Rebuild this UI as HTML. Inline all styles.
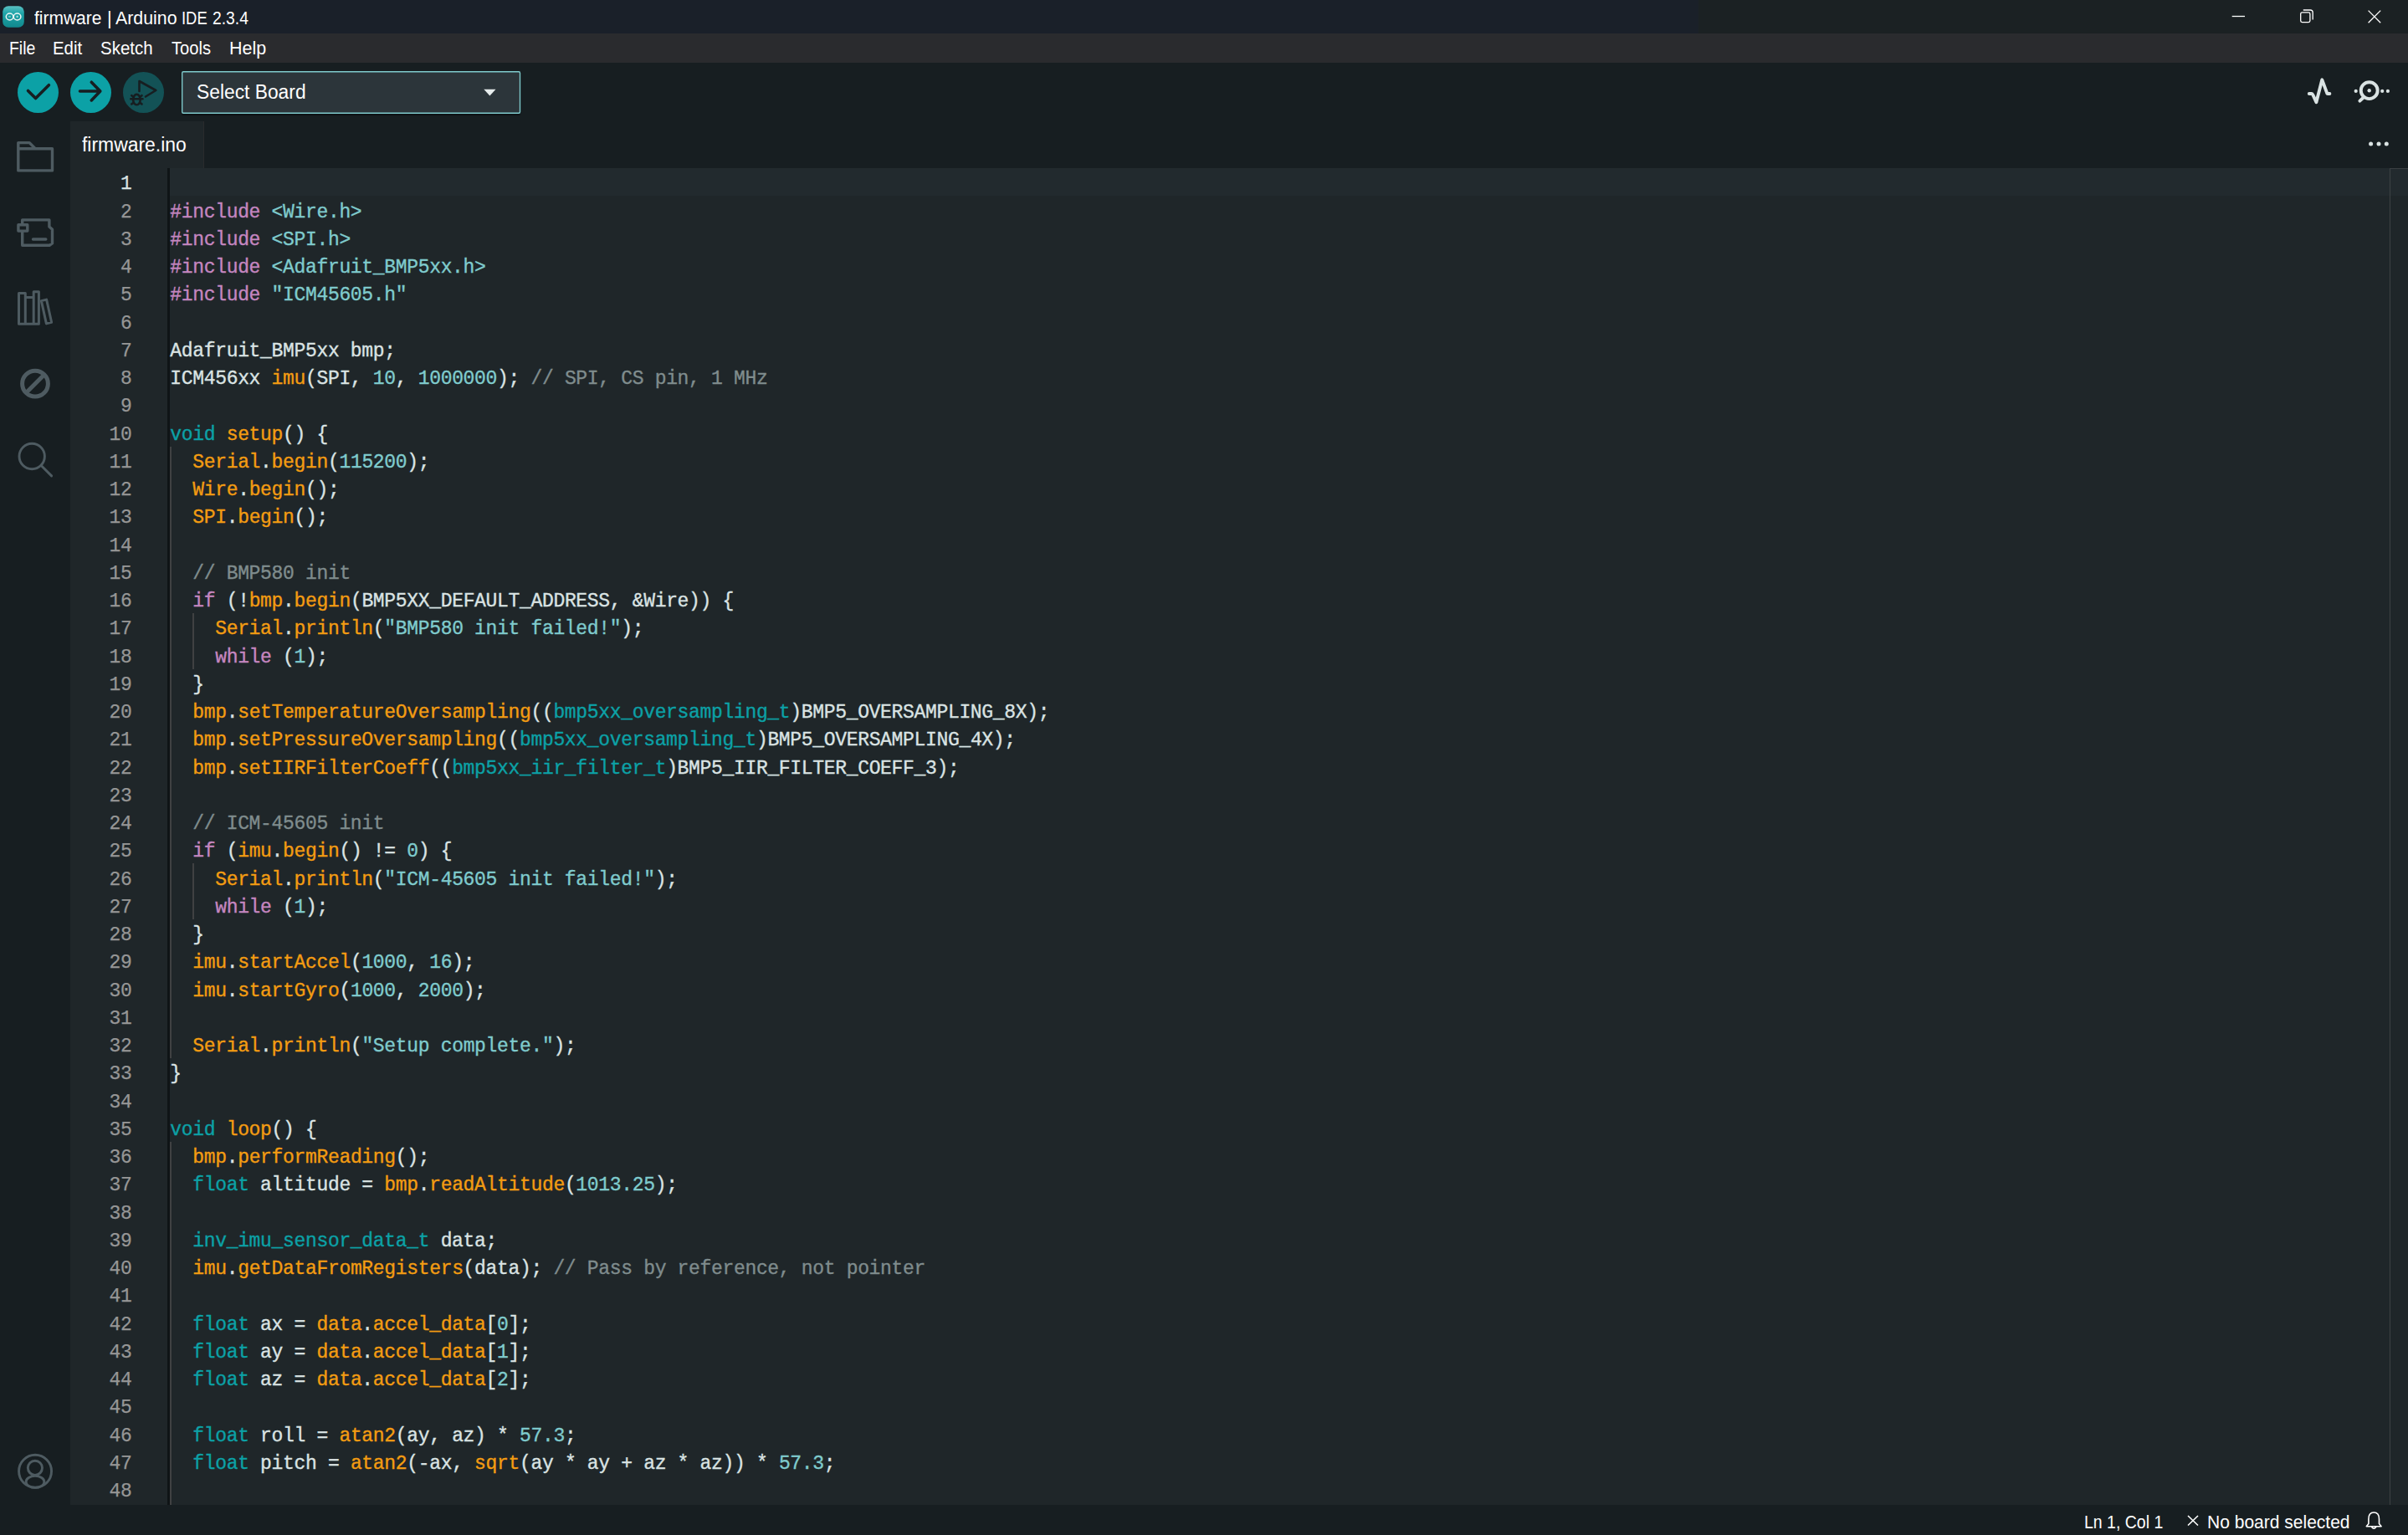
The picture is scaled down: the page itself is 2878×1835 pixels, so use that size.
<!DOCTYPE html>
<html><head><meta charset="utf-8">
<style>
*{margin:0;padding:0;box-sizing:border-box}
html,body{width:2878px;height:1835px;overflow:hidden;background:#171e21;font-family:"Liberation Sans",sans-serif}
.abs{position:absolute}
.w{position:absolute;white-space:nowrap;color:#fff;transform-origin:0 0;font-family:"Liberation Sans",sans-serif}
#title{position:absolute;left:0;top:0;width:2878px;height:40px;background:linear-gradient(90deg,#1a2029 0px,#1a2029 2030px,#1b2123 2030px,#1b2123 2878px)}
#title .t{position:absolute;left:40px;top:1.5px;height:40px;line-height:40px;color:#fff;font-size:20.7px;white-space:nowrap}
#menu{position:absolute;left:0;top:40px;width:2878px;height:35px;background:#2a2b2e}
#menu span{position:absolute;top:0;line-height:35px;color:#fff;font-size:21px;white-space:nowrap}
#toolbar{position:absolute;left:0;top:75px;width:2878px;height:70px;background:#171e21}
#tabs{position:absolute;left:0;top:145px;width:2878px;height:56px;background:#171e21}
#tab{position:absolute;left:84px;top:145px;width:160px;height:56px;background:#1f2629;border-right:1px solid #2a2b2d}
#tab span{position:absolute;left:14px;top:0.5px;line-height:56px;color:#fff;font-size:22.7px;white-space:nowrap}
#act{position:absolute;left:0;top:145px;width:84px;height:1654px;background:#171e21}
#editor{position:absolute;left:84px;top:201px;width:2794px;height:1598px;background:#1f2629;overflow:hidden}
#status{position:absolute;left:0;top:1799px;width:2878px;height:36px;background:#171e21}
#status span{position:absolute;top:2.5px;line-height:36px;color:#fff;font-size:21.5px;white-space:nowrap}
.hl{position:absolute;left:119px;top:0;width:2675px;height:33.25px;background:#222a2e}
.sep{position:absolute;left:116px;top:0;width:3px;height:1598px;background:#0f1416}
.ig{position:absolute;width:2px;background:#404142}
.ruler{position:absolute;left:2772px;top:0;width:1px;height:1598px;background:#3d4244}
.rtop{position:absolute;left:2772px;top:0;width:22px;height:1px;background:#3a3f42}
.l{position:absolute;left:119.3px;height:33.25px;line-height:33.25px;white-space:pre;font-family:"Liberation Mono",monospace;font-size:23px;letter-spacing:-0.33px;color:#dae3e3;padding-top:3.3px;-webkit-text-stroke:0.35px currentColor}
.n{position:absolute;left:0;width:73.5px;text-align:right;height:33.25px;line-height:33.25px;white-space:pre;font-family:"Liberation Mono",monospace;font-size:23px;letter-spacing:-0.33px;color:#969696;padding-top:3.3px;-webkit-text-stroke:0.25px currentColor}
.n.a{color:#dae3e3}
b{font-weight:normal}
b.t{color:#0ca1a6} b.o{color:#f39c12} b.c{color:#7fcbcd} b.p{color:#c586c0} b.g{color:#7f8c8d}
svg.ov{position:absolute;left:0;top:0;pointer-events:none}
</style></head><body>
<div id="title"></div>
<div id="menu"></div>
<div id="toolbar"></div>
<div class="abs" style="left:217px;top:85px;width:405px;height:51px;background:#2c353a;border-radius:2px;box-shadow:0 1.5px 1px #0e1215"></div>

<div id="tabs"></div>
<div id="tab"></div>
<div id="act"></div>
<div id="editor">
  <div class="hl"></div>
  <div class="sep"></div>
<div class="ig" style="left:118.70px;top:332.50px;height:731.50px"></div>
<div class="ig" style="left:145.64px;top:532.00px;height:66.50px"></div>
<div class="ig" style="left:145.64px;top:831.25px;height:66.50px"></div>
<div class="ig" style="left:118.70px;top:1163.75px;height:435.58px"></div>

<div class="l" style="top:0.00px"></div>
<div class="n a" style="top:0.00px">1</div>
<div class="l" style="top:33.25px"><b class=p>#include</b> <b class=c>&lt;Wire.h&gt;</b></div>
<div class="n" style="top:33.25px">2</div>
<div class="l" style="top:66.50px"><b class=p>#include</b> <b class=c>&lt;SPI.h&gt;</b></div>
<div class="n" style="top:66.50px">3</div>
<div class="l" style="top:99.75px"><b class=p>#include</b> <b class=c>&lt;Adafruit_BMP5xx.h&gt;</b></div>
<div class="n" style="top:99.75px">4</div>
<div class="l" style="top:133.00px"><b class=p>#include</b> <b class=c>"ICM45605.h"</b></div>
<div class="n" style="top:133.00px">5</div>
<div class="l" style="top:166.25px"></div>
<div class="n" style="top:166.25px">6</div>
<div class="l" style="top:199.50px">Adafruit_BMP5xx bmp;</div>
<div class="n" style="top:199.50px">7</div>
<div class="l" style="top:232.75px">ICM456xx <b class=o>imu</b>(SPI, <b class=c>10</b>, <b class=c>1000000</b>); <b class=g>// SPI, CS pin, 1 MHz</b></div>
<div class="n" style="top:232.75px">8</div>
<div class="l" style="top:266.00px"></div>
<div class="n" style="top:266.00px">9</div>
<div class="l" style="top:299.25px"><b class=t>void</b> <b class=o>setup</b>() {</div>
<div class="n" style="top:299.25px">10</div>
<div class="l" style="top:332.50px">  <b class=o>Serial</b>.<b class=o>begin</b>(<b class=c>115200</b>);</div>
<div class="n" style="top:332.50px">11</div>
<div class="l" style="top:365.75px">  <b class=o>Wire</b>.<b class=o>begin</b>();</div>
<div class="n" style="top:365.75px">12</div>
<div class="l" style="top:399.00px">  <b class=o>SPI</b>.<b class=o>begin</b>();</div>
<div class="n" style="top:399.00px">13</div>
<div class="l" style="top:432.25px"></div>
<div class="n" style="top:432.25px">14</div>
<div class="l" style="top:465.50px">  <b class=g>// BMP580 init</b></div>
<div class="n" style="top:465.50px">15</div>
<div class="l" style="top:498.75px">  <b class=p>if</b> (!<b class=o>bmp</b>.<b class=o>begin</b>(BMP5XX_DEFAULT_ADDRESS, &amp;Wire)) {</div>
<div class="n" style="top:498.75px">16</div>
<div class="l" style="top:532.00px">    <b class=o>Serial</b>.<b class=o>println</b>(<b class=c>"BMP580 init failed!"</b>);</div>
<div class="n" style="top:532.00px">17</div>
<div class="l" style="top:565.25px">    <b class=p>while</b> (<b class=c>1</b>);</div>
<div class="n" style="top:565.25px">18</div>
<div class="l" style="top:598.50px">  }</div>
<div class="n" style="top:598.50px">19</div>
<div class="l" style="top:631.75px">  <b class=o>bmp</b>.<b class=o>setTemperatureOversampling</b>((<b class=t>bmp5xx_oversampling_t</b>)BMP5_OVERSAMPLING_8X);</div>
<div class="n" style="top:631.75px">20</div>
<div class="l" style="top:665.00px">  <b class=o>bmp</b>.<b class=o>setPressureOversampling</b>((<b class=t>bmp5xx_oversampling_t</b>)BMP5_OVERSAMPLING_4X);</div>
<div class="n" style="top:665.00px">21</div>
<div class="l" style="top:698.25px">  <b class=o>bmp</b>.<b class=o>setIIRFilterCoeff</b>((<b class=t>bmp5xx_iir_filter_t</b>)BMP5_IIR_FILTER_COEFF_3);</div>
<div class="n" style="top:698.25px">22</div>
<div class="l" style="top:731.50px"></div>
<div class="n" style="top:731.50px">23</div>
<div class="l" style="top:764.75px">  <b class=g>// ICM-45605 init</b></div>
<div class="n" style="top:764.75px">24</div>
<div class="l" style="top:798.00px">  <b class=p>if</b> (<b class=o>imu</b>.<b class=o>begin</b>() != <b class=c>0</b>) {</div>
<div class="n" style="top:798.00px">25</div>
<div class="l" style="top:831.25px">    <b class=o>Serial</b>.<b class=o>println</b>(<b class=c>"ICM-45605 init failed!"</b>);</div>
<div class="n" style="top:831.25px">26</div>
<div class="l" style="top:864.50px">    <b class=p>while</b> (<b class=c>1</b>);</div>
<div class="n" style="top:864.50px">27</div>
<div class="l" style="top:897.75px">  }</div>
<div class="n" style="top:897.75px">28</div>
<div class="l" style="top:931.00px">  <b class=o>imu</b>.<b class=o>startAccel</b>(<b class=c>1000</b>, <b class=c>16</b>);</div>
<div class="n" style="top:931.00px">29</div>
<div class="l" style="top:964.25px">  <b class=o>imu</b>.<b class=o>startGyro</b>(<b class=c>1000</b>, <b class=c>2000</b>);</div>
<div class="n" style="top:964.25px">30</div>
<div class="l" style="top:997.50px"></div>
<div class="n" style="top:997.50px">31</div>
<div class="l" style="top:1030.75px">  <b class=o>Serial</b>.<b class=o>println</b>(<b class=c>"Setup complete."</b>);</div>
<div class="n" style="top:1030.75px">32</div>
<div class="l" style="top:1064.00px">}</div>
<div class="n" style="top:1064.00px">33</div>
<div class="l" style="top:1097.25px"></div>
<div class="n" style="top:1097.25px">34</div>
<div class="l" style="top:1130.50px"><b class=t>void</b> <b class=o>loop</b>() {</div>
<div class="n" style="top:1130.50px">35</div>
<div class="l" style="top:1163.75px">  <b class=o>bmp</b>.<b class=o>performReading</b>();</div>
<div class="n" style="top:1163.75px">36</div>
<div class="l" style="top:1197.00px">  <b class=t>float</b> altitude = <b class=o>bmp</b>.<b class=o>readAltitude</b>(<b class=c>1013.25</b>);</div>
<div class="n" style="top:1197.00px">37</div>
<div class="l" style="top:1230.25px"></div>
<div class="n" style="top:1230.25px">38</div>
<div class="l" style="top:1263.50px">  <b class=t>inv_imu_sensor_data_t</b> data;</div>
<div class="n" style="top:1263.50px">39</div>
<div class="l" style="top:1296.75px">  <b class=o>imu</b>.<b class=o>getDataFromRegisters</b>(data); <b class=g>// Pass by reference, not pointer</b></div>
<div class="n" style="top:1296.75px">40</div>
<div class="l" style="top:1330.00px"></div>
<div class="n" style="top:1330.00px">41</div>
<div class="l" style="top:1363.25px">  <b class=t>float</b> ax = <b class=o>data</b>.<b class=o>accel_data</b>[<b class=c>0</b>];</div>
<div class="n" style="top:1363.25px">42</div>
<div class="l" style="top:1396.50px">  <b class=t>float</b> ay = <b class=o>data</b>.<b class=o>accel_data</b>[<b class=c>1</b>];</div>
<div class="n" style="top:1396.50px">43</div>
<div class="l" style="top:1429.75px">  <b class=t>float</b> az = <b class=o>data</b>.<b class=o>accel_data</b>[<b class=c>2</b>];</div>
<div class="n" style="top:1429.75px">44</div>
<div class="l" style="top:1463.00px"></div>
<div class="n" style="top:1463.00px">45</div>
<div class="l" style="top:1496.25px">  <b class=t>float</b> roll = <b class=o>atan2</b>(ay, az) * <b class=c>57.3</b>;</div>
<div class="n" style="top:1496.25px">46</div>
<div class="l" style="top:1529.50px">  <b class=t>float</b> pitch = <b class=o>atan2</b>(-ax, <b class=o>sqrt</b>(ay * ay + az * az)) * <b class=c>57.3</b>;</div>
<div class="n" style="top:1529.50px">47</div>
<div class="l" style="top:1562.75px"></div>
<div class="n" style="top:1562.75px">48</div>
  <div class="ruler"></div><div class="rtop"></div>
</div>
<div id="status"></div>
<span class="w" style="left:40.50px;top:11.40px;font-size:22px;line-height:22px;transform:scaleX(0.9536)">firmware</span>
<span class="w" style="left:127.90px;top:11.40px;font-size:22px;line-height:22px;transform:scaleX(1.0000)">|</span>
<span class="w" style="left:138.10px;top:11.40px;font-size:22px;line-height:22px;transform:scaleX(0.9697)">Arduino</span>
<span class="w" style="left:217.22px;top:11.40px;font-size:22px;line-height:22px;transform:scaleX(0.8382)">IDE</span>
<span class="w" style="left:254.12px;top:11.40px;font-size:22px;line-height:22px;transform:scaleX(0.8785)">2.3.4</span>
<span class="w" style="left:10.82px;top:46.90px;font-size:22px;line-height:22px;transform:scaleX(0.8827)">File</span>
<span class="w" style="left:62.77px;top:46.90px;font-size:22px;line-height:22px;transform:scaleX(0.9267)">Edit</span>
<span class="w" style="left:120.07px;top:46.90px;font-size:22px;line-height:22px;transform:scaleX(0.9305)">Sketch</span>
<span class="w" style="left:205.00px;top:46.90px;font-size:22px;line-height:22px;transform:scaleX(0.9151)">Tools</span>
<span class="w" style="left:274.02px;top:46.90px;font-size:22px;line-height:22px;transform:scaleX(0.9770)">Help</span>
<span class="w" style="left:2490.91px;top:1808.80px;font-size:22px;line-height:22px;transform:scaleX(0.8862)">Ln 1, Col 1</span>
<span class="w" style="left:2637.84px;top:1808.80px;font-size:22px;line-height:22px;transform:scaleX(0.9551)">No board selected</span>
<span class="w" style="left:235.11px;top:98.90px;font-size:23px;line-height:23px;transform:scaleX(0.9916)">Select Board</span>
<span class="w" style="left:98.00px;top:161.70px;font-size:23px;line-height:23px;transform:scaleX(0.9963)">firmware.ino</span>

<svg class="ov" width="2878" height="1835" viewBox="0 0 2878 1835">
  <defs><linearGradient id="ag" x1="0" y1="0" x2="0" y2="1"><stop offset="0" stop-color="#5cc1c4"/><stop offset="0.35" stop-color="#1ea4a8"/><stop offset="1" stop-color="#11898e"/></linearGradient></defs>
  <!-- app icon -->
  <rect x="3.2" y="7.2" width="25.6" height="25.6" rx="6.8" fill="url(#ag)"/>
  <g fill="none" stroke="#eef5f5" stroke-width="1.5"><ellipse cx="11.6" cy="20" rx="4.3" ry="3.9"/><ellipse cx="20.6" cy="20" rx="4.3" ry="3.9"/></g><g fill="#e8f3f3" opacity="0.8"><rect x="10.2" y="19.4" width="2.6" height="1"/><rect x="19.3" y="19.4" width="2.6" height="1"/><rect x="20.1" y="18.6" width="1" height="2.6"/></g>
  <!-- window controls -->
  <g fill="none" stroke="#fff" stroke-width="1.3">
    <path d="M2667.7 19.5H2683"/>
    <rect x="2749.7" y="14.8" width="11.2" height="11.8" rx="1.8"/><path d="M2752.8 12.0H2761.3Q2764.2 12.0 2764.2 14.9V23.5"/>
    <path d="M2830.6 12.6L2845.2 27.2M2845.2 12.6L2830.6 27.2"/>
  </g>
  <!-- verify -->
  <circle cx="45.5" cy="110.5" r="24.5" fill="#0ca1a6"/>
  <path d="M33.5 108.4L42.6 117.5L58.4 101.7" fill="none" stroke="#171e21" stroke-width="3.6" stroke-linecap="round" stroke-linejoin="round"/>
  <!-- upload -->
  <circle cx="108.5" cy="110.5" r="24.5" fill="#0ca1a6"/>
  <path d="M95.5 109H119.5M109.3 98.2L119.8 109L109.3 119.9" fill="none" stroke="#171e21" stroke-width="3.6" stroke-linecap="round" stroke-linejoin="round"/>
  <!-- debug -->
  <circle cx="171.5" cy="110.5" r="24.5" fill="#135256"/>
  <g fill="none" stroke="#171e21" stroke-width="2.6" stroke-linecap="round" stroke-linejoin="round">
    <path d="M166.5 109V97L186.3 108L174 115.5"/>
    <ellipse cx="163.4" cy="119.1" rx="4.3" ry="6.2"/>
    <path d="M156.3 118.3H170.5M157.3 114.2L159.3 115.6M169.5 114.2L167.5 115.6M157.3 124.4L159.3 123M169.5 124.4L167.5 123"/>
  </g>
  <rect x="217.7" y="85.7" width="403.8" height="49.6" rx="1.5" fill="none" stroke="#7fcbcd" stroke-width="1.35"/>
  <!-- dropdown arrow -->
  <path d="M578.3 106.8H592.5L585.4 114.6Z" fill="#e6ecec"/>
  <!-- serial plotter -->
  <path d="M2759.8 112H2762.5Q2763.6 112 2764.3 113.3L2768.4 122.2L2775.3 95.3L2781.3 111.7Q2781.5 112 2782.2 112H2784.4" fill="none" stroke="#dae3e3" stroke-width="3.9" stroke-linecap="round" stroke-linejoin="round"/>
  <!-- serial monitor -->
  <g fill="#dae3e3"><circle cx="2815.7" cy="108.9" r="2.1"/><circle cx="2847.2" cy="108.9" r="2.1"/><circle cx="2853.9" cy="108.9" r="2.1"/><circle cx="2831.7" cy="108.2" r="2.2"/></g>
  <circle cx="2831.7" cy="108.2" r="9.95" fill="none" stroke="#dae3e3" stroke-width="3.9"/>
  <path d="M2824.8 116.5L2820.4 120.6" stroke="#dae3e3" stroke-width="3.9" stroke-linecap="round"/>
  <!-- more dots -->
  <g fill="#dae3e3"><circle cx="2833.6" cy="172.1" r="2.5"/><circle cx="2843" cy="172.1" r="2.5"/><circle cx="2852.3" cy="172.1" r="2.5"/></g>
  <!-- activity bar -->
  <g fill="none" stroke="#4e5b61" stroke-width="3.4" stroke-linejoin="round" stroke-linecap="round">
    <path d="M21.8 170.6H35.2L42.2 177.8H62.5V203.9H21.8Z M21.8 177.8H42.2"/>
    <path d="M26.7 267.2V262.9H58.9V271L62.5 274.3V290.9L59.1 293.3H26.7V277.7 M21.9 268.7H32.8V276.1H21.9Z M39.5 286H54.8"/>
    <path d="M22.5 350.4H30.3V387.2H22.5Z M30.3 355.4H40.2 M40.2 387.2V348.8H46.4V387.2H22.5 M49.4 359.6L55.6 358.1L61.6 385.3L55.4 386.9Z" stroke-width="3"/>
    <circle cx="42" cy="458.7" r="15.4" stroke-width="5"/>
    <path d="M31.5 469.2L52.5 448.2" stroke-width="5" stroke-linecap="butt"/>
    <circle cx="38.2" cy="545.5" r="15.2" stroke-width="2.9"/>
    <path d="M49.2 556.5L61.6 568.9" stroke-width="3"/>
  </g>
  <g fill="none" stroke="#4e5b61" stroke-width="2.9">
    <circle cx="42.05" cy="1758.8" r="19.5"/>
    <circle cx="41.9" cy="1754.8" r="8.6"/>
    <ellipse cx="42" cy="1771.4" rx="10.9" ry="7"/>
  </g>
  <!-- status icons -->
  <path d="M2615 1812L2627 1823.5M2627 1812L2615 1823.5" stroke="#fff" stroke-width="1.6" fill="none"/>
  <path d="M2837.2 1808C2832.5 1808 2830.9 1811.5 2830.9 1816V1821.5L2828.3 1824.7H2846.1L2843.5 1821.5V1816C2843.5 1811.5 2841.9 1808 2837.2 1808Z M2834.5 1825.3Q2837.2 1829 2839.9 1825.3" fill="none" stroke="#fff" stroke-width="1.6" stroke-linejoin="round"/>
</svg>
</body></html>
